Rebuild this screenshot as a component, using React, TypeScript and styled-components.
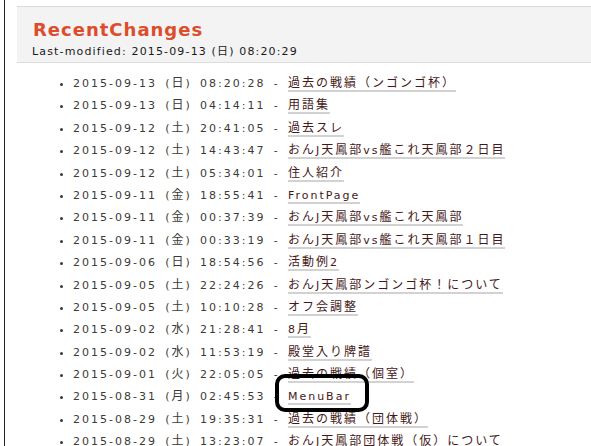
import styled, { createGlobalStyle } from "styled-components";

const GlobalStyle = createGlobalStyle`
    html, body {
        margin: 0;
        padding: 0;
        background: #fff;
    }
    body {
        font-family: "DejaVu Sans", "Noto Sans CJK JP", sans-serif;
    }
`;

interface IChange {
    date: string;
    page: string;
    marked?: boolean;
}

const changes: IChange[] = [
    { date: "2015-09-13 (日) 08:20:28", page: "過去の戦績（ンゴンゴ杯）" },
    { date: "2015-09-13 (日) 04:14:11", page: "用語集" },
    { date: "2015-09-12 (土) 20:41:05", page: "過去スレ" },
    { date: "2015-09-12 (土) 14:43:47", page: "おんJ天鳳部vs艦これ天鳳部２日目" },
    { date: "2015-09-12 (土) 05:34:01", page: "住人紹介" },
    { date: "2015-09-11 (金) 18:55:41", page: "FrontPage" },
    { date: "2015-09-11 (金) 00:37:39", page: "おんJ天鳳部vs艦これ天鳳部" },
    { date: "2015-09-11 (金) 00:33:19", page: "おんJ天鳳部vs艦これ天鳳部１日目" },
    { date: "2015-09-06 (日) 18:54:56", page: "活動例2" },
    { date: "2015-09-05 (土) 22:24:26", page: "おんJ天鳳部ンゴンゴ杯！について" },
    { date: "2015-09-05 (土) 10:10:28", page: "オフ会調整" },
    { date: "2015-09-02 (水) 21:28:41", page: "8月" },
    { date: "2015-09-02 (水) 11:53:19", page: "殿堂入り牌譜" },
    { date: "2015-09-01 (火) 22:05:05", page: "過去の戦績（個室）" },
    { date: "2015-08-31 (月) 02:45:53", page: "MenuBar", marked: true },
    { date: "2015-08-29 (土) 19:35:31", page: "過去の戦績（団体戦）" },
    { date: "2015-08-29 (土) 13:23:07", page: "おんJ天鳳部団体戦（仮）について" },
];

// japanese runs are drawn a bit bigger than the latin text, as in the wiki
const jp = (text: string) =>
    text.split(/([\u3000-\u9fff\uff00-\uffef]+)/).map((part, i) =>
        i % 2 ? <Jp key={i}>{part}</Jp> : part
    );

export default function App() {
    return (
        <>
            <GlobalStyle />
            <Page>
                <Side />
                <Main>
                    <Header>
                        <Title>RecentChanges</Title>
                        <Modified>Last-modified: 2015-09-13 (日) 08:20:29</Modified>
                    </Header>
                    <List>
                        {changes.map((c) => (
                            <Item key={c.date}>
                                {jp(c.date)} - <PageLink href="#" $marked={c.marked}>{jp(c.page)}</PageLink>
                            </Item>
                        ))}
                    </List>
                </Main>
            </Page>
        </>
    );
}

const Page = styled.div`
    display: flex;
    height: 446px;
    overflow: hidden;
`;

const Side = styled.div`
    width: 4px;
    flex-shrink: 0;
    border-right: 1px solid #222;
`;

const Main = styled.div`
    flex: 1;
    padding: 6px 0 0 12px;
`;

const Header = styled.div`
    background: #f3f3f3;
    border-top: 1px solid #dcdcdc;
    border-bottom: 1px solid #dcdcdc;
    height: 57px;
    box-sizing: border-box;
    padding: 12px 0 0 16px;
`;

const Title = styled.h1`
    margin: 0;
    font-size: 18px;
    line-height: 22px;
    font-weight: bold;
    letter-spacing: 1px;
    color: #dd4c2b;
`;

const Modified = styled.div`
    margin: 2px 0 0 -1px;
    font-size: 11px;
    line-height: 18px;
    letter-spacing: 1.15px;
    color: #1a1a1a;
`;

const List = styled.ul`
    margin: 10px 0 0;
    padding: 0 0 0 56px;
    list-style: disc;
    color: #3c3a36;
`;

const Item = styled.li`
    font-size: 11px;
    line-height: 22.4px;
    height: 22.4px;
    letter-spacing: 2px;
    word-spacing: 2.75px;
    white-space: nowrap;
`;

const Jp = styled.span`
    font-size: 12px;
    line-height: 1;
`;

const PageLink = styled.a<{ $marked?: boolean }>`
    position: relative;
    color: #451818;
    text-decoration: none;
    border-bottom: 2px solid #d2d2d2;

    ${(p) => p.$marked && `
        &::after {
            content: "";
            position: absolute;
            left: -13px;
            right: -18px;
            top: -16px;
            bottom: -9px;
            border: 4px solid #000;
            border-radius: 10px;
        }
    `}
`;
